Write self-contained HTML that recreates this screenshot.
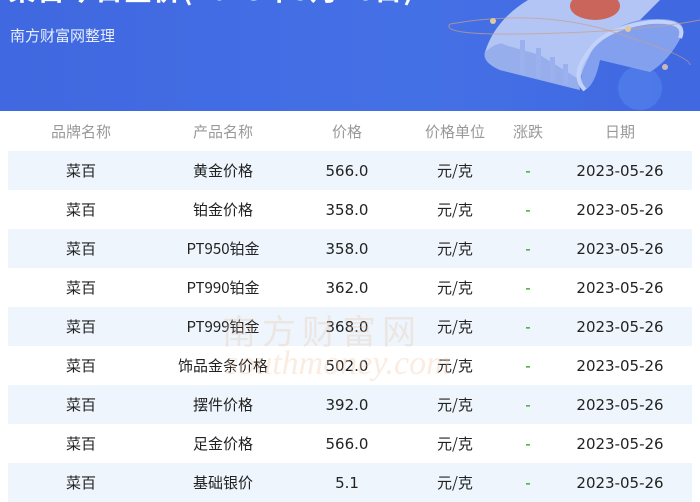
<!DOCTYPE html>
<html><head><meta charset="utf-8"><style>
*{margin:0;padding:0;box-sizing:border-box}
body{width:700px;height:500px;overflow:hidden;background:#fff;font-family:"DejaVu Sans","Liberation Sans","Noto Sans CJK SC",sans-serif}
.banner{position:absolute;left:0;top:0;width:700px;height:111px;background:linear-gradient(90deg,#4068e0,#4470e6 60%,#4068e0);overflow:hidden}
.title{position:absolute;left:8px;top:-31px;color:#fff;font-size:28px;font-weight:bold;font-family:"Noto Sans CJK SC",sans-serif;white-space:nowrap;letter-spacing:1px}
.sub{position:absolute;left:10px;top:25px;color:#e8eeff;font-size:15px;font-family:"Noto Sans CJK SC",sans-serif}
table{position:absolute;left:8px;top:111px;width:684px;border-collapse:collapse}
td,th{text-align:center;font-size:15px;height:39px;padding:0;font-weight:normal;color:#222;white-space:nowrap}
th{color:#999;height:40px;font-family:"Noto Sans CJK SC",sans-serif}
tr.o td{background:#eef5fd}
td.g{color:#1a9a1a !important}
.cn{font-family:"Noto Sans CJK SC",sans-serif}
.wm{position:absolute;left:222px;top:305px;font-size:34px;color:rgba(235,190,160,.28);font-family:"Noto Sans CJK SC",sans-serif;letter-spacing:6px;z-index:2}
.wm2{position:absolute;left:225px;top:345px;font-size:34px;color:rgba(240,200,170,.35);font-style:italic;font-family:"Liberation Serif",serif;z-index:2}
</style></head><body>
<div class="banner">
<div class="title">菜百今日金价(2023年5月26日)</div>
<div class="sub">南方财富网整理</div>
<svg width="700" height="111" style="position:absolute;left:0;top:0">
<circle cx="640" cy="88" r="22" fill="#5a8af0" opacity=".5"/>
<path d="M528 0 L660 0 L640 20 Q600 30 590 55 Q575 85 580 90 L500 70 Q482 62 485 52 Q495 20 528 0 Z" fill="#b3c5f5"/>
<path d="M485 52 Q500 40 505 45 L540 55 L580 80 L580 90 L500 70 Q482 62 485 52Z" fill="#8fa8ea" opacity=".8"/>
<path d="M640 20 Q690 15 682 35 Q670 60 650 72 L600 60 Q595 85 585 90 Q575 80 590 55 Q600 30 640 20Z" fill="#8aa6ee" opacity=".9"/>
<path d="M585 90 Q570 75 590 50 Q605 28 650 22 Q688 20 680 38" fill="none" stroke="#c3d2fa" stroke-width="4"/>
<ellipse cx="595" cy="6" rx="25" ry="14" fill="#c9655a"/>
<rect x="520" y="40" width="5" height="35" fill="#9ab1ee"/><rect x="536" y="48" width="5" height="30" fill="#9ab1ee"/><rect x="550" y="57" width="5" height="24" fill="#9ab1ee"/><rect x="563" y="64" width="5" height="20" fill="#9ab1ee"/>
<path d="M450 24 Q530 10 600 28 Q690 55 690 65" fill="none" stroke="#c9a08a" stroke-width="1" opacity=".7"/>
<path d="M450 24 Q440 35 520 34 Q640 32 700 20" fill="none" stroke="#c9a08a" stroke-width="1" opacity=".7"/>
<circle cx="493" cy="21" r="3" fill="#e0c8a0"/><circle cx="628" cy="29" r="3" fill="#e0c8a0"/><circle cx="665" cy="67" r="3" fill="#c8b8b8"/>
</svg>
</div>
<div class="wm">南方财富网</div><div class="wm2">southmoney.com</div>
<table>
<tr><th>品牌名称</th><th>产品名称</th><th>价格</th><th>价格单位</th><th>涨跌</th><th>日期</th></tr>
<tr class="o"><td class="cn" style="width:146px">菜百</td><td class="cn" style="width:138px">黄金价格</td><td style="width:110px">566.0</td><td class="cn" style="width:106px">元/克</td><td class="g" style="width:40px">-</td><td>2023-05-26</td></tr>
<tr><td class="cn">菜百</td><td class="cn">铂金价格</td><td>358.0</td><td class="cn">元/克</td><td class="g">-</td><td>2023-05-26</td></tr>
<tr class="o"><td class="cn">菜百</td><td class="cn">PT950铂金</td><td>358.0</td><td class="cn">元/克</td><td class="g">-</td><td>2023-05-26</td></tr>
<tr><td class="cn">菜百</td><td class="cn">PT990铂金</td><td>362.0</td><td class="cn">元/克</td><td class="g">-</td><td>2023-05-26</td></tr>
<tr class="o"><td class="cn">菜百</td><td class="cn">PT999铂金</td><td>368.0</td><td class="cn">元/克</td><td class="g">-</td><td>2023-05-26</td></tr>
<tr><td class="cn">菜百</td><td class="cn">饰品金条价格</td><td>502.0</td><td class="cn">元/克</td><td class="g">-</td><td>2023-05-26</td></tr>
<tr class="o"><td class="cn">菜百</td><td class="cn">摆件价格</td><td>392.0</td><td class="cn">元/克</td><td class="g">-</td><td>2023-05-26</td></tr>
<tr><td class="cn">菜百</td><td class="cn">足金价格</td><td>566.0</td><td class="cn">元/克</td><td class="g">-</td><td>2023-05-26</td></tr>
<tr class="o"><td class="cn">菜百</td><td class="cn">基础银价</td><td>5.1</td><td class="cn">元/克</td><td class="g">-</td><td>2023-05-26</td></tr>
</table>
</body></html>
